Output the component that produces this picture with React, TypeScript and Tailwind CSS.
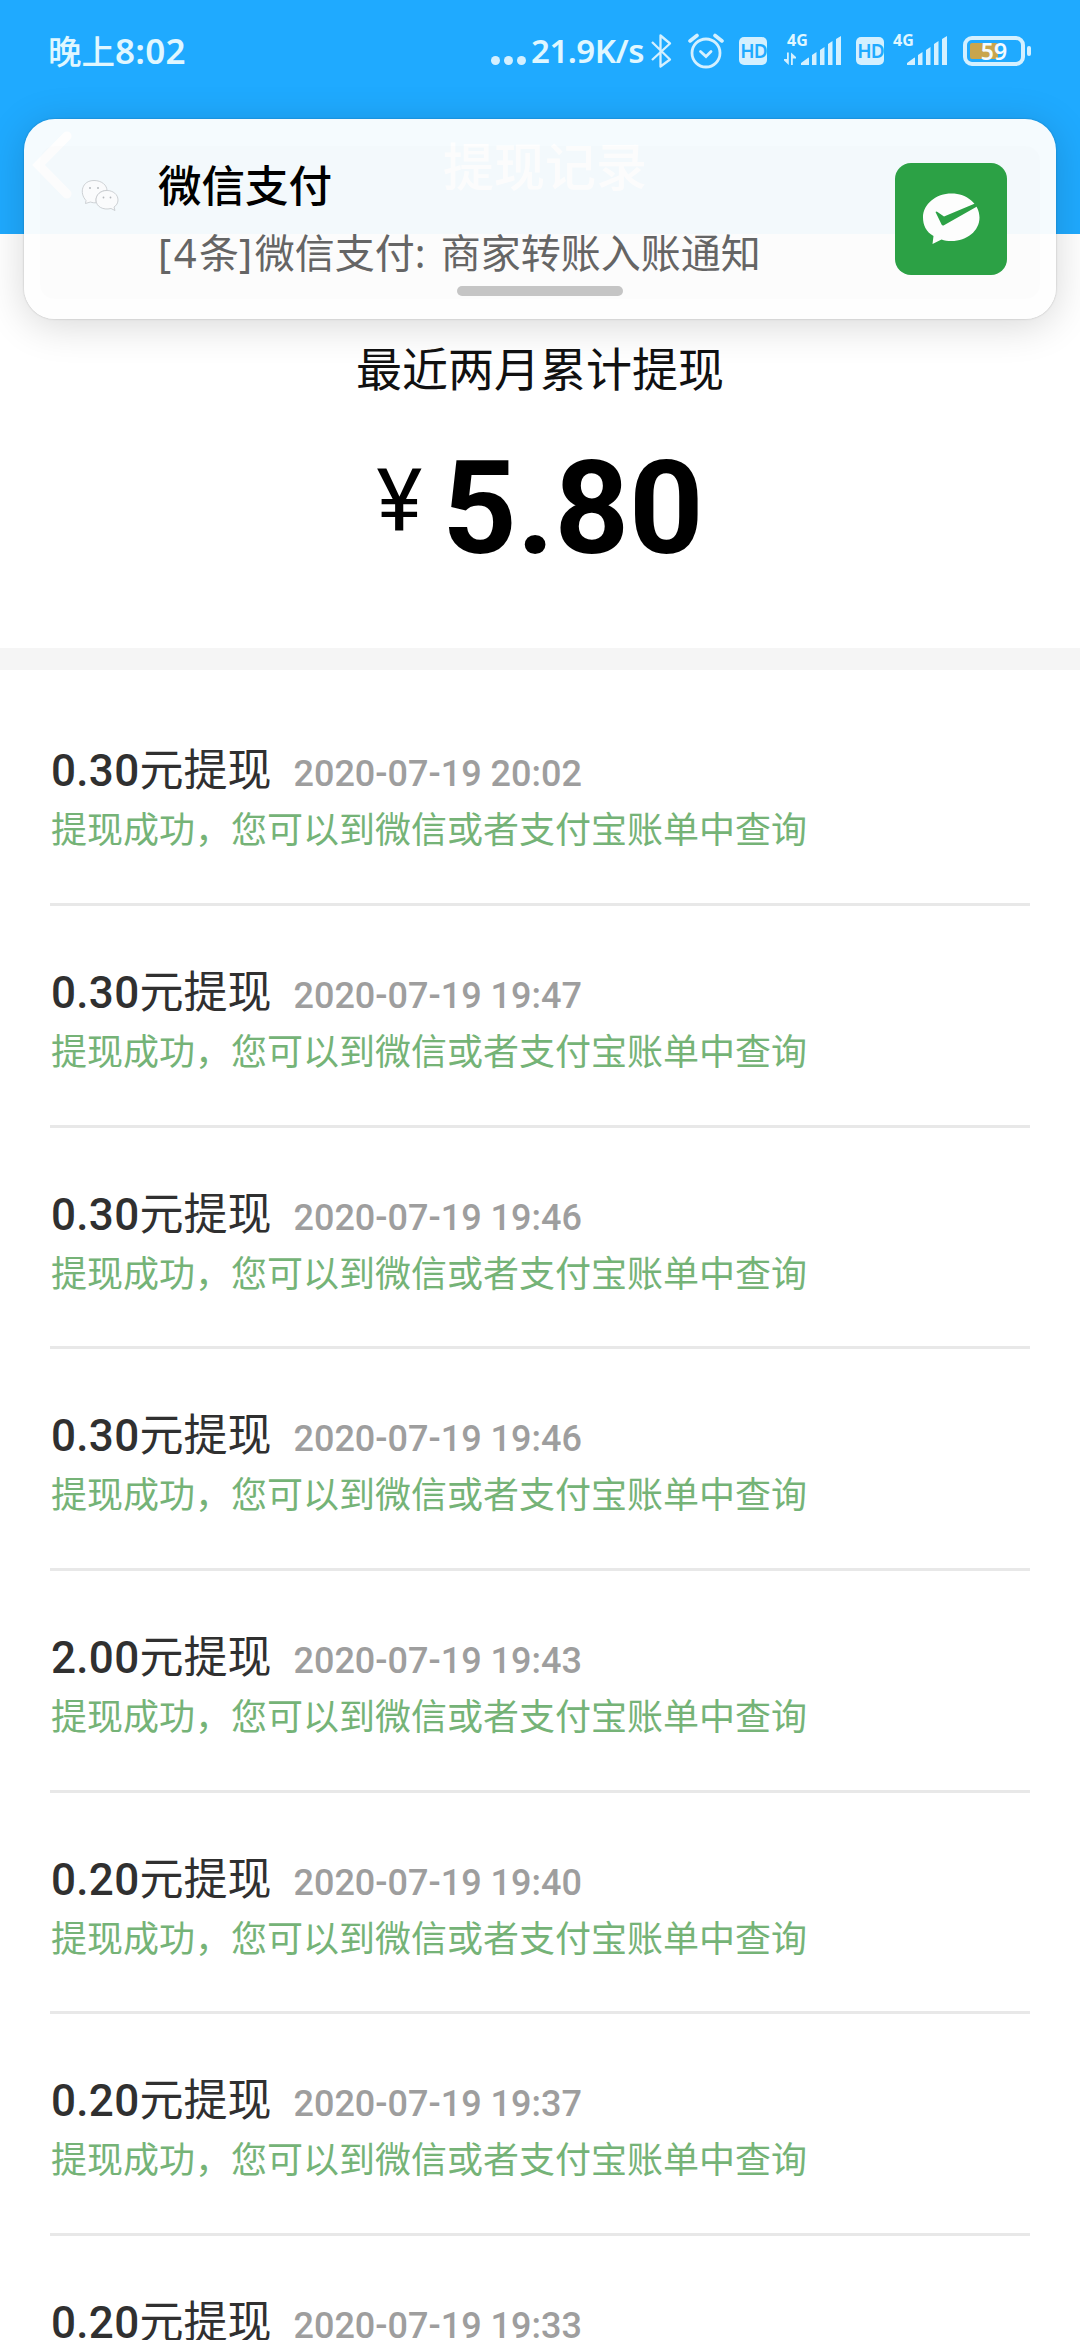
import React from 'react';

const records = [
  { amount: '0.30', time: '2020-07-19 20:02' },
  { amount: '0.30', time: '2020-07-19 19:47' },
  { amount: '0.30', time: '2020-07-19 19:46' },
  { amount: '0.30', time: '2020-07-19 19:46' },
  { amount: '2.00', time: '2020-07-19 19:43' },
  { amount: '0.20', time: '2020-07-19 19:40' },
  { amount: '0.20', time: '2020-07-19 19:37' },
  { amount: '0.20', time: '2020-07-19 19:33' },
];

function HdBadge() {
  return (
    <span className="flex h-7 w-7 items-center justify-center rounded-[5px] bg-[#d4f0ff] pl-px font-['Noto_Sans'] text-[19px] leading-none font-semibold tracking-[-1px] text-[#1faaff]">
      HD
    </span>
  );
}

function Signal({ arrows }: { arrows?: boolean }) {
  return (
    <div className="relative h-9 w-[58px]">
      <span className="absolute top-[-3px] left-[3px] font-['Noto_Sans'] text-[16px] leading-5 font-bold text-[#e0f7ff]">4G</span>
      <svg width="58" height="36" viewBox="0 0 58 36" fill="#d4f0ff">
        {arrows && (
          <path d="M3 19.500h1.800v12.500L0 27.500v-1.500h3zM7 32V19.500l5 4.500v1.500H8.800V32z" />
        )}
        <path d="M17 32v-2l7.500-5.500q0.500 0 0.500 0.500v6.500q0 0.500-0.500 0.500zM28 32V22l4.500-3v13zM36 32V17l4.500-3v18zM44 32V11l4.500-3v24zM52 32V6l5-3v28.500q0 0.500-0.500 0.500z" />
      </svg>
    </div>
  );
}

function StatusBar() {
  return (
    <div className="flex h-[105px] items-start pt-[33px] pl-12 text-[#e0f7ff]">
      <div className="flex h-9 w-[443px] items-center font-['Noto_Sans','Noto_Sans_CJK_SC',sans-serif] text-[35px] leading-9 font-semibold">
        <span className="w-[67px] text-[33.5px] font-medium">晚上</span>
        <span className="tracking-[0.3px]">8:02</span>
      </div>
      <div className="flex h-9 items-center">
        <svg width="36" height="36" viewBox="0 0 36 36" fill="#d4f0ff">
          <circle cx="4.500" cy="27.500" r="4.500" />
          <circle cx="17.500" cy="27.500" r="4.500" />
          <circle cx="30.500" cy="27.500" r="4.500" />
        </svg>
        <span className="ml-1 w-[113px] font-['Noto_Sans',sans-serif] text-[33px] leading-9 font-semibold tracking-[-0.5px] whitespace-nowrap">
          21.9K/s
        </span>
      </div>
      <svg className="ml-[7px]" width="22" height="36" viewBox="0 0 22 36" fill="none" stroke="#d4f0ff" strokeWidth="2.300" strokeLinejoin="round">
        <path d="M1 9l18 17.500-9.500 7V2.500l9.500 8L1 27" />
      </svg>
      <svg className="ml-[15px]" width="36" height="36" viewBox="0 0 36 36" fill="none" stroke="#d4f0ff" strokeWidth="2.800" strokeLinecap="round">
        <circle cx="18" cy="20" r="14" />
        <path d="M12.500 18.500l5.500 5 5-5" />
        <path d="M2 8l7-5.500M34 8l-7-5.500" strokeWidth="3.600" />
      </svg>
      <div className="mt-1 ml-[15px]"><HdBadge /></div>
      <div className="ml-[17px]"><Signal arrows /></div>
      <div className="mt-1 ml-[14px]"><HdBadge /></div>
      <div className="ml-[6px]"><Signal /></div>
      <div className="mt-[3px] ml-[15px] flex items-center">
        <div className="relative h-[30px] w-[62px] rounded-[9px] border-4 border-[#d4f0ff] p-[3px]">
          <div className="h-4 w-7 rounded-[2px] bg-[#c9a54c]" />
          <span className="absolute inset-0 flex items-center justify-center font-['Noto_Sans'] text-[23px] leading-none font-semibold text-[#f4fbff]">
            59
          </span>
        </div>
        <div className="ml-[2px] h-[10px] w-1 rounded-full bg-[#d4f0ff]" />
      </div>
    </div>
  );
}

function Notification() {
  return (
    <div className="absolute top-[119px] left-6 flex h-[200px] w-[1032px] rounded-[31px] bg-[#fefefe]/96 shadow-[0_6px_40px_rgba(0,0,0,0.16),0_0_2px_rgba(0,0,0,0.25)]">
      <div className="absolute top-[27px] right-4 bottom-5 left-4 rounded-[14px] bg-black/[0.006]" />
      <svg className="mt-[60px] ml-[57px]" width="38" height="34" viewBox="0 0 38 34" fill="#fcfdfe" stroke="#c4c8cb" strokeWidth="0.800">
        <path d="M5 21.500C-2 14 1 1.500 13 1.500c8 0 13 5 13 10-7 0-11 4.500-11 10 0 1 .2 1.500.4 2.200-2 .3-4 0-6-.7L4.500 24.500z" />
        <path d="M26 11.500c6 0 11 4 11 9.500 0 3-1.500 5.500-4 7l1 3.500-4-2c-8 2-15-2-15-8.500 0-5.500 5-9.500 11-9.500z" />
        <g fill="#b8bcc0" stroke="none"><circle cx="9" cy="9" r="1" /><circle cx="17" cy="9" r="1" /><circle cx="22.500" cy="18.500" r="0.900" /><circle cx="29.500" cy="18.500" r="0.900" /></g>
      </svg>
      <div className="ml-[39px] w-[737px] font-['Noto_Sans','Noto_Sans_CJK_SC',sans-serif] whitespace-nowrap">
        <div className="mt-[35px] font-['Noto_Sans_CJK_SC'] text-[43.500px] leading-[60px] font-medium text-black">微信支付</div>
        <div className="mt-[13px] text-[40px] leading-[52px] text-[#666]">
          <span className="tracking-[2.500px]">[4</span>条<span className="tracking-[2.500px]">]</span>微信支付<span className="tracking-[2.500px]">: </span>商家转账入账通知
        </div>
      </div>
      <svg className="mt-11" width="112" height="112" viewBox="0 0 112 112">
        <rect width="112" height="112" rx="16" fill="#2da346" />
        <path d="M56.500 30.500c15.500 0 28 10.500 28 24S72 78 56.500 78c-4 0-7-.5-10-1.500L37.500 81l1-8C31 69 28 62 28 54.500 28 41 41 30.500 56.500 30.500z" fill="#fff" />
        <path d="M40.500 49q1-.8 2 0l6.500 4.500L80 40.500l2 3L48.500 62.500q-1.200.3-1.800-.7z" fill="#2da346" />
      </svg>
      <div className="absolute top-[167px] left-[433px] h-[10px] w-[166px] rounded-full bg-[#c5c5c5]" />
    </div>
  );
}

export default function App() {
  return (
    <div className="relative h-[2340px] w-[1080px] overflow-hidden bg-white font-['Roboto','Noto_Sans_CJK_SC',sans-serif]">
      <header className="h-[234px] bg-[#1faaff]">
        <StatusBar />
        <div className="grid h-[124px] grid-cols-[1fr_auto_1fr] items-center pb-1">
          <svg className="ml-8" width="42" height="72" viewBox="0 0 42 72" fill="none" stroke="#fff" strokeWidth="9" strokeLinecap="round">
            <path d="M35 7L6.500 36l28.500 29" />
          </svg>
          <h1 className="ml-[10px] pt-[7px] text-[51px] leading-none font-medium text-white">提现记录</h1>
        </div>
      </header>
      <Notification />
      <section className="flex h-[414px] flex-col items-center pt-[103px]">
        <div className="text-[46px] leading-[66px] text-[#111]">最近两月累计提现</div>
        <div className="mt-[41px] flex items-start text-black">
          <span className="mt-[6px] text-[87px] leading-[102px]">¥</span>
          <span className="ml-[20px] text-[130px] leading-[130px] font-bold">5.80</span>
        </div>
      </section>
      <div className="h-[22px] bg-[#f5f5f5]" />
      <main className="pt-[14.300px]">
        {records.map((r, i) => (
          <article key={i} className="mx-[50px] h-[221.700px] border-b-[3px] border-[#e8e8e8] pt-[61px]">
            <div className="flex items-baseline pl-px leading-[52px]">
              <span className="text-[44px] font-medium tracking-[0.300px] text-[#303030]">{r.amount}</span>
              <span className="text-[44px] text-[#303030]">元提现</span>
              <span className="ml-[22px] text-[36px] font-medium text-[#9e9e9e]">{r.time}</span>
            </div>
            <div className="mt-[5px] pl-px text-[36px] leading-[52px] text-[#75b377]">提现成功，您可以到微信或者支付宝账单中查询</div>
          </article>
        ))}
      </main>
    </div>
  );
}
